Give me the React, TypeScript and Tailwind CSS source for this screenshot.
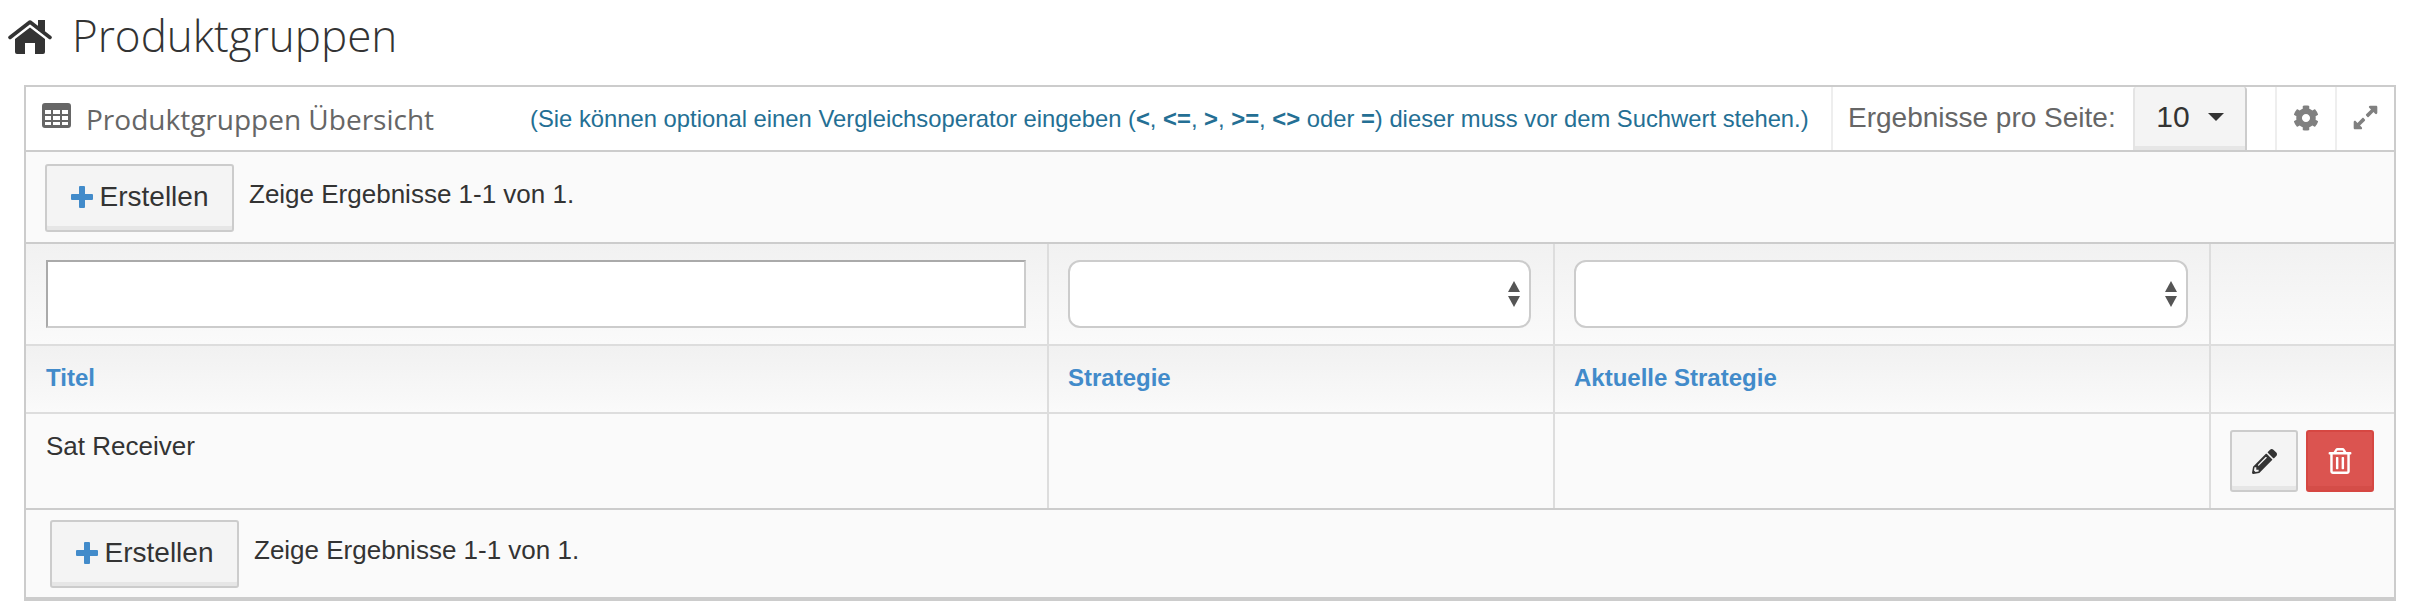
import { FaPencilAlt, FaCog, FaExpandAlt, FaRegTrashAlt } from 'react-icons/fa';

const ARIAL = "font-['Liberation_Sans',Arial,sans-serif]";
const OPEN = "font-['Open_Sans',sans-serif]";

function HomeIcon() {
  return (
    <svg width="44" height="34" viewBox="0 0 44 34" className="mr-[20px] mt-[16px] shrink-0 text-[#333]">
      <rect x="30" y="0" width="7" height="11" fill="currentColor" />
      <path d="M2 17.5 L22 2 L42 17.5" fill="none" stroke="currentColor" strokeWidth="3.6" strokeLinecap="round" strokeLinejoin="round" />
      <path d="M22 7.5 L37 19 V32 Q37 34 35 34 H27 V23 H17 V34 H9 Q7 34 7 32 V19 Z" fill="currentColor" />
    </svg>
  );
}

function TableIcon() {
  return (
    <svg width="29" height="25" viewBox="0 0 29 25" className="mb-[6px] mr-[15px] shrink-0 text-[#666]">
      <path
        fillRule="evenodd"
        d="M3 0 H26 Q29 0 29 3 V22 Q29 25 26 25 H3 Q0 25 0 22 V3 Q0 0 3 0 Z M3 7 V11 H9 V7 Z M11 7 V11 H18 V7 Z M20 7 V11 H26 V7 Z M3 13 V17 H9 V13 Z M11 13 V17 H18 V13 Z M20 13 V17 H26 V13 Z M3 19 V22 H9 V19 Z M11 19 V22 H18 V19 Z M20 19 V22 H26 V19 Z"
        fill="currentColor"
      />
    </svg>
  );
}

function PlusIcon() {
  return (
    <svg width="22" height="22" viewBox="0 0 22 22" className="shrink-0 text-[#428bca]">
      <path d="M8 1 Q8 0 9 0 H13 Q14 0 14 1 V8 H21 Q22 8 22 9 V13 Q22 14 21 14 H14 V21 Q14 22 13 22 H9 Q8 22 8 21 V14 H1 Q0 14 0 13 V9 Q0 8 1 8 H8 Z" fill="currentColor" />
    </svg>
  );
}

function CreateBar({ pad }: { pad: string }) {
  return (
    <div className={`flex items-start bg-[#fafafa] ${pad}`}>
      <button
        type="button"
        className="flex h-[68px] w-[189px] items-center justify-center gap-[7px] rounded-[3px] border-2 border-[#ccc] bg-[#f4f4f4] pb-[2px] text-[28px] text-[#333] shadow-[inset_0_-4px_0_#e6e6e6]"
      >
        <PlusIcon />
        Erstellen
      </button>
      <p className="ml-[15px] mt-[15px] text-[26px] leading-[30px] text-[#333]">Zeige Ergebnisse 1-1 von 1.</p>
    </div>
  );
}

function Updown() {
  return (
    <svg width="14" height="28" viewBox="0 0 14 28" className="text-[#555]">
      <path d="M7 1 L13 12 L1 12 Z" fill="currentColor" />
      <path d="M7 27 L13 16 L1 16 Z" fill="currentColor" />
    </svg>
  );
}

function SelectBox({ width }: { width: string }) {
  return (
    <div className={`flex h-[68px] items-center justify-end rounded-[12px] border-2 border-[#ccc] bg-white pr-[8px] ${width}`}>
      <Updown />
    </div>
  );
}

export default function App() {
  return (
    <div className={`h-[614px] w-[2410px] overflow-hidden bg-white ${ARIAL}`}>
      <h1 className={`flex h-[85px] items-start pl-[8px] pt-[4px] text-[44px] font-light leading-[62px] text-[#333] ${OPEN}`}>
        <HomeIcon />
        Produktgruppen
      </h1>

      <div className="ml-[24px] w-[2372px] border-2 border-b-4 border-[#ccc]">
        {/* panel header */}
        <div className="flex h-[63px] items-stretch bg-white">
          <div className={`flex w-[475px] items-center pl-[16px] text-[28px] text-[#666] ${OPEN}`}>
            <TableIcon />
            Produktgruppen Übersicht
          </div>
          <div className="flex w-[1330px] items-center pl-[29px] text-[23.8px] text-[#246f94]">
            <span>
              (Sie können optional einen Vergleichsoperator eingeben (<b>&lt;</b>, <b>&lt;=</b>, <b>&gt;</b>, <b>&gt;=</b>, <b>&lt;&gt;</b> oder <b>=</b>) dieser muss vor dem Suchwert stehen.)
            </span>
          </div>
          <div className="flex w-[302px] items-center border-l-2 border-[#eee] pb-[1px] pl-[15px] text-[28px] text-[#666]">
            Ergebnisse pro Seite:
          </div>
          <div className="flex w-[114px] items-center justify-center gap-[18px] rounded-t-[3px] border-x-2 border-l-[#e4e4e4] border-r-[#ccc] bg-[#f4f4f4] pb-[4px] text-[30px] text-[#333] shadow-[inset_0_-4px_0_#e6e6e6]">
            10
            <span className="h-0 w-0 border-x-[8px] border-t-[8px] border-x-transparent border-t-[#333]" />
          </div>
          <div className="w-[28px]" />
          <div className="flex w-[60px] items-center justify-center border-l-2 border-[#eee] pb-[2px] text-[#808080]">
            <FaCog className="text-[26px]" />
          </div>
          <div className="flex flex-1 items-center justify-center border-l-2 border-[#eee] pb-[2px] text-[#808080]">
            <FaExpandAlt className="text-[27px]" />
          </div>
        </div>

        <div className="border-t-2 border-[#ccc]">
          <CreateBar pad="h-[90px] pl-[19px] pt-[12px]" />
        </div>

        {/* table */}
        <div className="grid grid-cols-[1021px_506px_656px_1fr] border-t-2 border-[#ccc]">
          <div className="h-[100px] bg-gradient-to-b from-[#f1f1f1] to-[#fafafa] pl-[20px] pt-[16px]">
            <div className="h-[68px] w-[980px] border-2 border-[#aaa] border-b-[#ccc] border-r-[#ccc] bg-white" />
          </div>
          <div className="h-[100px] border-l-2 border-[#ddd] bg-gradient-to-b from-[#f1f1f1] to-[#fafafa] pl-[19px] pt-[16px]">
            <SelectBox width="w-[463px]" />
          </div>
          <div className="h-[100px] border-l-2 border-[#ddd] bg-gradient-to-b from-[#f1f1f1] to-[#fafafa] pl-[19px] pt-[16px]">
            <SelectBox width="w-[614px]" />
          </div>
          <div className="h-[100px] border-l-2 border-[#ddd] bg-gradient-to-b from-[#f1f1f1] to-[#fafafa]" />

          {['Titel', 'Strategie', 'Aktuelle Strategie', ''].map((label, i) => (
            <div
              key={label || 'actions'}
              className={`flex h-[68px] items-center border-t-2 border-[#ddd] bg-gradient-to-b from-[#f1f1f1] to-[#fafafa] pb-[2px] text-[24px] font-bold text-[#428bca] ${i > 0 ? 'border-l-2 pl-[19px]' : 'pl-[20px]'}`}
            >
              {label}
            </div>
          ))}

          <div className="h-[96px] border-t-2 border-[#ddd] bg-[#fafafa] pl-[20px] pt-[17px] text-[26px] leading-[30px] text-[#333]">
            Sat Receiver
          </div>
          <div className="h-[96px] border-l-2 border-t-2 border-[#ddd] bg-[#fafafa]" />
          <div className="h-[96px] border-l-2 border-t-2 border-[#ddd] bg-[#fafafa]" />
          <div className="flex h-[96px] gap-[8px] border-l-2 border-t-2 border-[#ddd] bg-[#fafafa] pl-[19px] pt-[16px]">
            <button type="button" className="flex h-[62px] w-[68px] items-center justify-center rounded-[3px] border-2 border-[#ccc] bg-[#f4f4f4] text-[#333] shadow-[inset_0_-4px_0_#e6e6e6]">
              <FaPencilAlt className="text-[25px]" />
            </button>
            <button type="button" className="flex h-[62px] w-[68px] items-center justify-center rounded-[3px] border-2 border-[#d64742] bg-[#db5450] text-white shadow-[inset_0_-4px_0_#d44d48]">
              <FaRegTrashAlt className="text-[26px]" />
            </button>
          </div>
        </div>

        <div className="border-t-2 border-[#ccc]">
          <CreateBar pad="h-[87px] pl-[24px] pt-[10px]" />
        </div>
      </div>
    </div>
  );
}
